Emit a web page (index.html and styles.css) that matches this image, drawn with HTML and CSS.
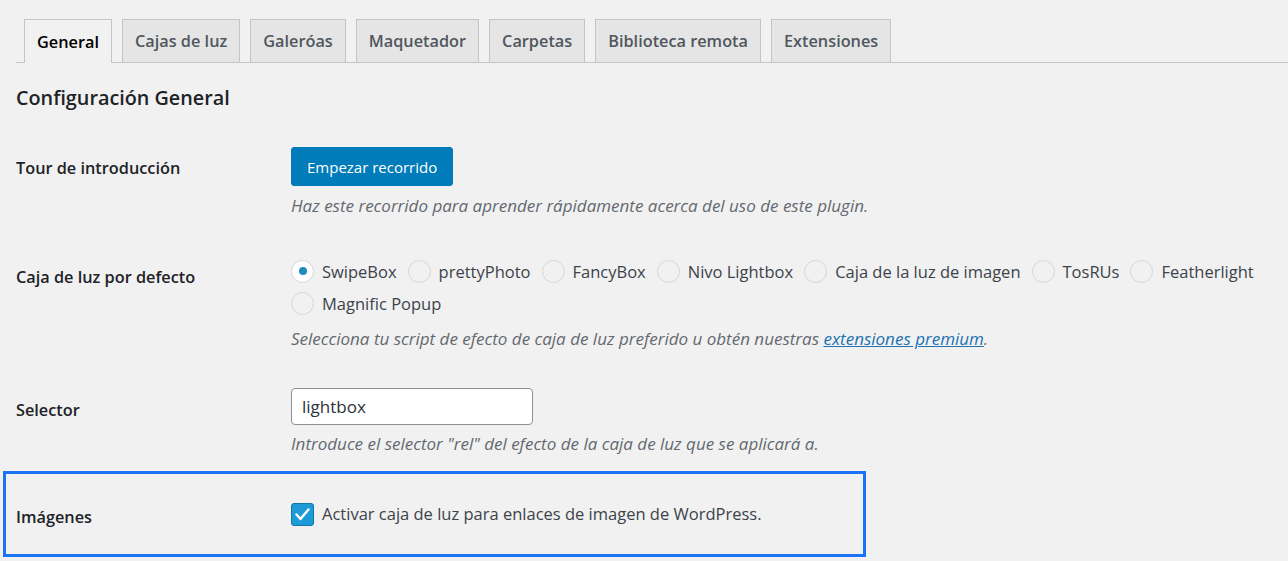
FILE: index.html
```html
<html>
  <head>
    <link rel="stylesheet" href="styles.css">
    <title>Configuración General</title>
  </head>
  <body>
    <div class="wrap">
      <nav class="tabs">
        <a class="tab active">General</a>
        <a class="tab">Cajas de luz</a>
        <a class="tab">Galeróas</a>
        <a class="tab">Maquetador</a>
        <a class="tab">Carpetas</a>
        <a class="tab">Biblioteca remota</a>
        <a class="tab">Extensiones</a>
      </nav>

      <h2 class="title">Configuración General</h2>

      <div class="row row-tour">
        <div class="label">Tour de introducción</div>
        <div class="field">
          <button class="button">Empezar recorrido</button>
          <p class="desc">Haz este recorrido para aprender rápidamente acerca del uso de este plugin.</p>
        </div>
      </div>

      <div class="row row-lightbox">
        <div class="label">Caja de luz por defecto</div>
        <div class="field">
          <div class="radios">
            <label class="radio"><span class="dot checked"></span>SwipeBox</label>
            <label class="radio"><span class="dot"></span>prettyPhoto</label>
            <label class="radio"><span class="dot"></span>FancyBox</label>
            <label class="radio"><span class="dot"></span>Nivo Lightbox</label>
            <label class="radio"><span class="dot"></span>Caja de la luz de imagen</label>
            <label class="radio"><span class="dot"></span>TosRUs</label>
            <label class="radio"><span class="dot"></span>Featherlight</label>
            <label class="radio"><span class="dot"></span>Magnific Popup</label>
          </div>
          <p class="desc">Selecciona tu script de efecto de caja de luz preferido u obtén nuestras <a href="#">extensiones premium</a>.</p>
        </div>
      </div>

      <div class="row row-selector">
        <div class="label">Selector</div>
        <div class="field">
          <div class="input">lightbox</div>
          <p class="desc">Introduce el selector "rel" del efecto de la caja de luz que se aplicará a.</p>
        </div>
      </div>

      <div class="highlight">
        <div class="row row-images">
          <div class="label">Imágenes</div>
          <div class="field">
            <label class="check">
              <span class="box">
                <svg width="15" height="13" viewBox="0 0 15 13"><path d="M1.5 6.5 L5.5 11 L13.5 1.5" fill="none" stroke="#fff" stroke-width="2.4" stroke-linecap="round" stroke-linejoin="round"/></svg>
              </span>
              Activar caja de luz para enlaces de imagen de WordPress.
            </label>
          </div>
        </div>
      </div>
    </div>
  </body>
</html>
```

FILE: styles.css
```css
body {
  margin: 0;
  background: #f1f1f1;
  font-family: "Open Sans", "Noto Sans", sans-serif;
  font-size: 16.5px;
  color: #3c434a;
}
.wrap {
  padding: 19px 0 0 16px;
}

.tabs {
  display: flex;
  gap: 10px;
  padding-left: 8px;
  border-bottom: 1px solid #c3c4c7;
  height: 43px;
}
.tab {
  display: flex;
  align-items: center;
  height: 42px;
  padding: 0 12px;
  background: #e5e5e5;
  border: 1px solid #c3c4c7;
  border-bottom: none;
  color: #50575e;
  font-weight: 600;
  font-size: 16.3px;
}
.tab.active {
  background: #f1f1f1;
  color: #000;
  height: 43px;
  margin-bottom: -1px;
}

.title {
  margin: 22px 0 0;
  font-size: 19.8px;
  line-height: 26px;
  font-weight: 600;
  color: #1d2327;
}

.row {
  display: flex;
}
.label {
  width: 275px;
  flex-shrink: 0;
  font-weight: 600;
  font-size: 16.3px;
  color: #1d2327;
  line-height: 22px;
}
.field {
  flex: 1;
  padding-right: 10px;
}
.desc {
  margin: 9px 0 0;
  font-style: italic;
  font-size: 17px;
  color: #646970;
  line-height: 22px;
}
.desc a {
  color: #2271b1;
}

.row-tour {
  margin-top: 36px;
}
.row-tour .label {
  padding-top: 10px;
}
.button {
  height: 39px;
  padding: 0 15px;
  background: #007cba;
  color: #fff;
  border: 1px solid #007cba;
  border-radius: 3px;
  font-family: inherit;
  font-size: 15px;
}

.row-lightbox {
  margin-top: 38px;
}
.row-lightbox .label {
  padding-top: 11px;
}
.radios {
  display: flex;
  flex-wrap: wrap;
  column-gap: 11px;
}
.radio {
  display: flex;
  align-items: center;
  gap: 8px;
  height: 32px;
}
.dot {
  width: 21px;
  height: 21px;
  border: 1px solid #d6d6d6;
  border-radius: 50%;
  display: flex;
  align-items: center;
  justify-content: center;
}
.dot.checked {
  background: #fff;
}
.dot.checked::after {
  content: "";
  width: 8px;
  height: 8px;
  border-radius: 50%;
  background: #1e8cbe;
}

.row-selector {
  margin-top: 38px;
}
.row-selector .label {
  padding-top: 11px;
}
.input {
  width: 230px;
  height: 35px;
  line-height: 35px;
  padding-left: 10px;
  background: #fff;
  border: 1px solid #8c8f94;
  border-radius: 4px;
  color: #2c3338;
  font-size: 17px;
}
.row-selector .desc {
  margin-top: 8px;
}

.highlight {
  margin: 16px 0 7px -13px;
  width: 857px;
  border: 3px solid #1b74f5;
}
.row-images {
  padding: 28px 0 26px 10px;
}
.row-images .label {
  padding-top: 4px;
}
.check {
  display: flex;
  align-items: center;
  gap: 8px;
  line-height: 24px;
}
.box {
  width: 21px;
  height: 21px;
  background: #1e9bd7;
  border: 1px solid #0f77aa;
  border-radius: 3px;
  display: flex;
  align-items: center;
  justify-content: center;
}
```
